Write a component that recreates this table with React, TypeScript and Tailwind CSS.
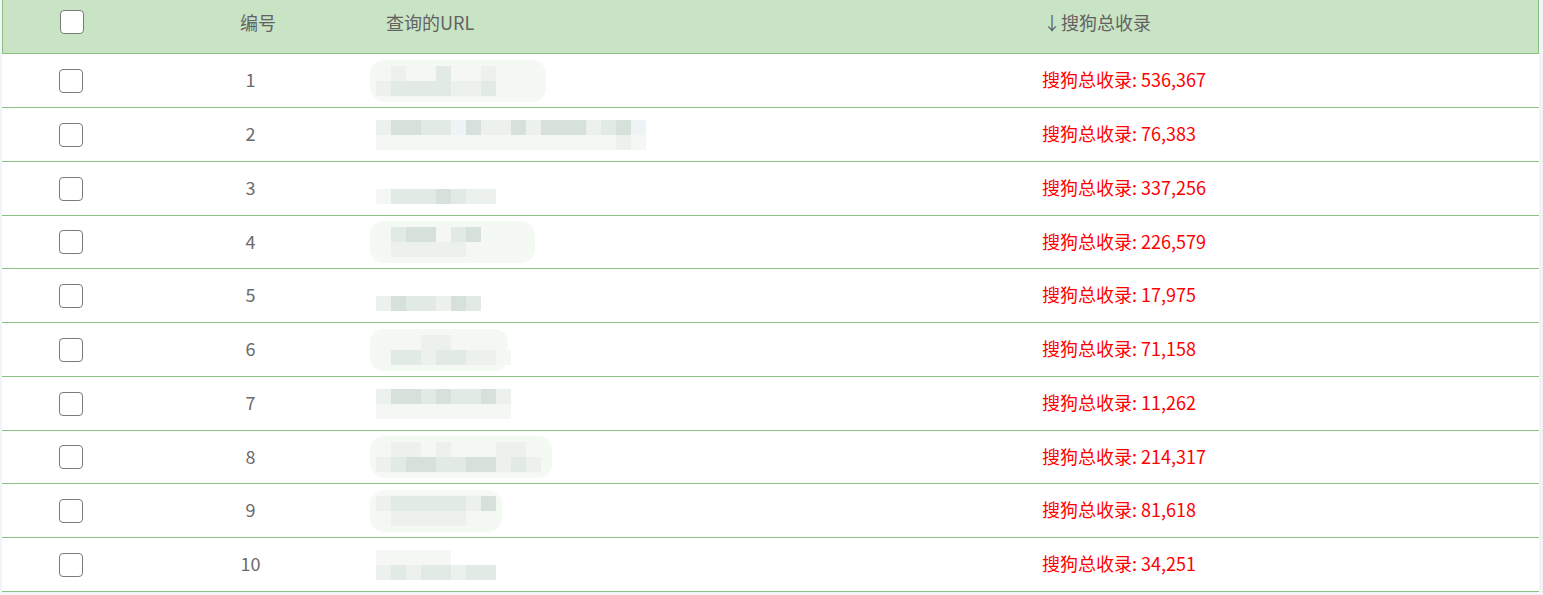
import React from 'react'

type Row = {
  id: number
  count: string
  h: string
  top: string
  bottom: string
  smudge?: string
}

// shades used by the mosaic blur over the URL column
const shade: Record<string, string> = {
  d: 'bg-[#d5e1da]',
  m: 'bg-[#e1eae4]',
  l: 'bg-[#ecf1ed]',
  f: 'bg-[#f5f7f5]',
  b: 'bg-[#eef4f5]',
  ' ': 'bg-transparent',
}

const rows: Row[] = [
  { id: 1, count: '536,367', h: 'h-[54px]', top: 'flffmfflf', bottom: 'lmmmmllmf', smudge: 'w-[176px]' },
  { id: 2, count: '76,383', h: 'h-[54px]', top: 'lddmmbdlldldddlmdb', bottom: 'fffffffffffffffflf' },
  { id: 3, count: '337,256', h: 'h-[54px]', top: '        ', bottom: 'fmmmdmll' },
  { id: 4, count: '226,579', h: 'h-[53px]', top: 'fmddfmd', bottom: 'flllllf', smudge: 'w-[165px]' },
  { id: 5, count: '17,975', h: 'h-[54px]', top: '       ', bottom: 'ldmmldm' },
  { id: 6, count: '71,158', h: 'h-[54px]', top: 'fffllfff ', bottom: 'fmmlmmllf', smudge: 'w-[138px]' },
  { id: 7, count: '11,262', h: 'h-[54px]', top: 'lddmdmmdl', bottom: 'fffffffff' },
  { id: 8, count: '214,317', h: 'h-[53px]', top: 'fllflfffllf', bottom: 'lmddmmddlml', smudge: 'w-[182px]' },
  { id: 9, count: '81,618', h: 'h-[54px]', top: 'lmmmmmld', bottom: 'flllllff', smudge: 'w-[132px]' },
  { id: 10, count: '34,251', h: 'h-[54px]', top: 'fffff   ', bottom: 'lmlmmlmm' },
]

function Checkbox() {
  return <div className="w-[24px] h-[24px] rounded-[4px] border-[1.5px] border-[#7b7b7b] bg-white" />
}

function Blur({ top, bottom, smudge }: { top: string; bottom: string; smudge?: string }) {
  return (
    <div className="relative">
      {smudge && (
        <div className={`absolute -left-[6px] -top-[6px] h-[42px] rounded-[14px] bg-[#f5f9f4] ${smudge}`} />
      )}
      <div className="relative flex flex-col">
        {[top, bottom].map((line, i) => (
          <div key={i} className="flex">
            {line.split('').map((c, j) => (
              <div key={j} className={`w-[15px] h-[15px] ${shade[c]}`} />
            ))}
          </div>
        ))}
      </div>
    </div>
  )
}

export default function App() {
  return (
    <div
      className="min-h-screen bg-[#f3f4f7] pl-[2px]"
      style={{ fontFamily: '"Noto Sans CJK SC", "Noto Sans", sans-serif' }}
    >
      <div className="w-[1537px] bg-white">
        <div className="grid grid-cols-[138px_234px_658px_1fr] h-[54px] items-center pb-[9px] bg-[#c9e4c5] border-x border-b border-[#89bf80] text-[18px] text-[#626262]">
          <div className="flex justify-center">
            <Checkbox />
          </div>
          <div className="text-center">编号</div>
          <div className="pl-[11px]">查询的URL</div>
          <div className="pl-[10px]">↓搜狗总收录</div>
        </div>

        {rows.map((r) => (
          <div
            key={r.id}
            className={`grid grid-cols-[138px_234px_658px_1fr] items-center border-b border-[#8cc084] text-[18px] ${r.h}`}
          >
            <div className="flex justify-center">
              <Checkbox />
            </div>
            <div className="text-center pr-[13px] pb-[2px] text-[#6b6b6b]">{r.id}</div>
            <div className="pl-[2px]">
              <Blur top={r.top} bottom={r.bottom} smudge={r.smudge} />
            </div>
            <div className="pl-[10px] pb-[2px] text-[#ff0000]">搜狗总收录: {r.count}</div>
          </div>
        ))}
      </div>
    </div>
  )
}
